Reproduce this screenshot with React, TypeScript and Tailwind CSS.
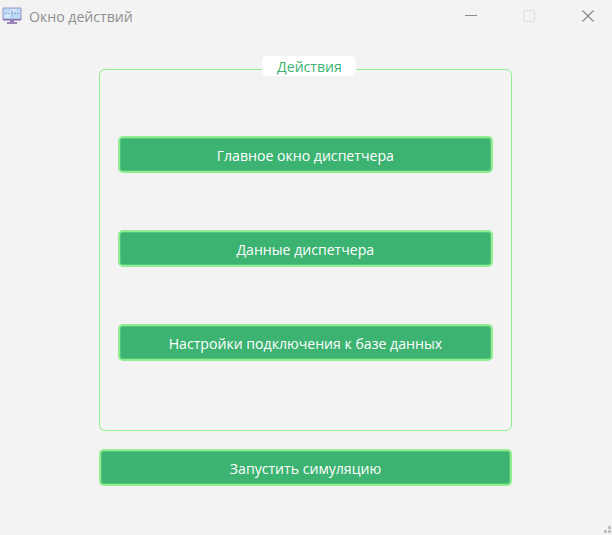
import React from "react";

function MonitorIcon() {
  return (
    <svg width="20" height="18" viewBox="0 0 20 18" fill="none">
      <path d="M8 13h4v3H8z" fill="#8d72ad" />
      <path d="M5 15h10v2H5z" fill="#9b87b8" />
      <rect x="0.5" y="0.5" width="19" height="13" rx="1" fill="#9b91cc" />
      <rect x="1.5" y="1.5" width="17" height="10.5" fill="#bcdcf6" />
      <path d="M2 10 10 2h5l-9 9H2z" fill="#d5eafb" />
      <path d="M3 6.5h5M12 6.5h5" stroke="#8ba5cf" strokeDasharray="2 1" />
      <path d="M10 3.5v4M10 8.5v1" stroke="#8188b8" />
      <path d="M1 12.5h18" stroke="#8d76b3" strokeWidth="1.5" />
    </svg>
  );
}

function TitleBar() {
  return (
    <header className="flex h-8 items-center pl-[2px] pr-[17px] text-[#8f8f8f]">
      <MonitorIcon />
      <h1 className="ml-[7px] -mt-px origin-left scale-x-[0.94] whitespace-nowrap text-[15px] leading-5">Окно действий</h1>
      <div className="ml-auto flex items-center">
        <svg width="131" height="14" viewBox="0 0 131 14" fill="none">
          <path d="M1 6.5h12" stroke="#8c8c8c" />
          <rect x="59.5" y="1.5" width="11" height="11" rx="1" stroke="#dedede" />
          <path d="m118.5 1.5 11 11m0-11-11 11" stroke="#8c8c8c" strokeWidth="1.3" />
        </svg>
      </div>
    </header>
  );
}

function ActionButton({ label }: { label: string }) {
  return (
    <button className="flex h-[37px] w-full shrink-0 items-center justify-center rounded-[5px] border-2 border-[#90ee90] bg-[#3cb371] pt-px text-[15px] leading-5 text-white shadow-[inset_0_0_0_1px_#56c47c]">
      <span className="inline-block scale-x-[0.94] whitespace-nowrap">{label}</span>
    </button>
  );
}

export default function App() {
  return (
    <div className="flex h-[535px] w-[612px] flex-col overflow-hidden bg-[#f3f3f3] font-['Open_Sans','Noto_Sans',sans-serif]">
      <TitleBar />
      <main className="ml-[99px] mt-6 flex w-[413px] flex-col">
        <section className="flex flex-col">
          <h2 className="z-10 ml-[163px] flex h-5 w-[94px] items-center justify-center rounded-[5px] bg-white text-[15px] leading-5 text-[#3cb371]">
            <span className="inline-block scale-x-[0.94]">Действия</span>
          </h2>
          <div className="-mt-[7px] flex h-[362px] flex-col gap-[57px] rounded-md border border-[#90ee90] px-[18px] pt-[66px]">
            <ActionButton label="Главное окно диспетчера" />
            <ActionButton label="Данные диспетчера" />
            <ActionButton label="Настройки подключения к базе данных" />
          </div>
        </section>
        <div className="mt-[18px]">
          <ActionButton label="Запустить симуляцию" />
        </div>
      </main>
      <footer className="mt-auto flex justify-end pb-[2px] pr-px">
        <svg width="7" height="7" viewBox="0 0 7 7" fill="#bfbfbf">
          <path d="M4 0h3v3H4zM0 4h3v3H0zM4 4h3v3H4z" />
        </svg>
      </footer>
    </div>
  );
}
